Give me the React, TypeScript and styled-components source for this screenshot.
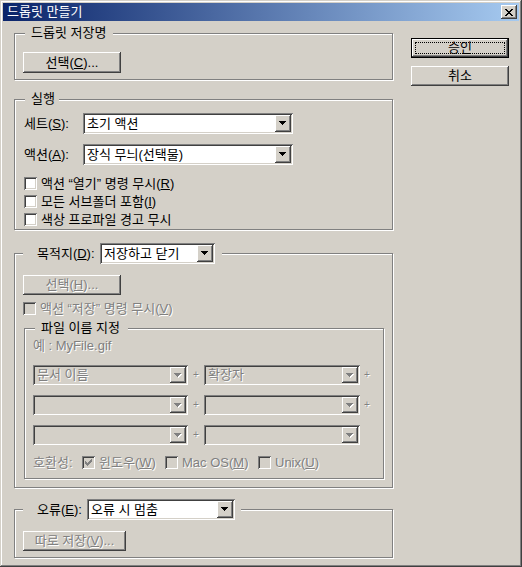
import React from "react";
import styled, { createGlobalStyle, css } from "styled-components";

const FACE = "#D4D0C8";
const SHADOW = "#808080";
const DARK = "#404040";
const FONT = `"Liberation Sans", "Noto Sans CJK KR", sans-serif`;

const GlobalStyle = createGlobalStyle`
  *, *::before, *::after { box-sizing: border-box; }
  html, body { margin: 0; padding: 0; background: ${FACE}; }
  body { font-family: ${FONT}; font-size: 13px; color: #000; }
`;

const raised = css`
  background: ${FACE};
  box-shadow: inset -1px -1px ${DARK}, inset 1px 1px #fff, inset -2px -2px ${SHADOW},
    inset 2px 2px ${FACE};
`;

const sunken = css`
  box-shadow: inset 1px 1px ${SHADOW}, inset -1px -1px #fff, inset 2px 2px ${DARK},
    inset -2px -2px ${FACE};
`;

const disabledText = css`
  color: ${SHADOW};
  text-shadow: 1px 1px 0 #fff;
`;

const Window = styled.div`
  width: 522px;
  height: 567px;
  padding: 3px;
  background: ${FACE};
  box-shadow: inset -1px -1px ${DARK}, inset 1px 1px ${FACE}, inset -2px -2px ${SHADOW},
    inset 2px 2px #fff;
  display: flex;
  flex-direction: column;
`;

const TitleBar = styled.div`
  flex: none;
  height: 18px;
  display: flex;
  align-items: center;
  justify-content: space-between;
  padding: 0 2px 0 4px;
  background: linear-gradient(to right, #0a246a, #a6caf0);
`;

const TitleText = styled.span`
  color: #fff;
  font-size: 13px;
  line-height: 14px;
  white-space: nowrap;
`;

const CloseButton = styled.span`
  width: 16px;
  height: 14px;
  ${raised};
  display: flex;
  align-items: center;
  justify-content: center;
`;

const Body = styled.div`
  flex: 1;
  display: flex;
  align-items: flex-start;
  padding: 5px 0 0 11px;
`;

const LeftColumn = styled.div`
  width: 379px;
  display: flex;
  flex-direction: column;
`;

const RightColumn = styled.div`
  margin-left: 18px;
  padding-top: 12px;
  display: flex;
  flex-direction: column;
  gap: 8px;
`;

const Group = styled.fieldset<{ $mt?: number; $ml?: number; $w?: number }>`
  margin: ${(p) => p.$mt ?? 0}px 0 0 ${(p) => p.$ml ?? 0}px;
  width: ${(p) => (p.$w ? `${p.$w}px` : "auto")};
  padding: 0;
  min-width: 0;
  border: 1px solid ${SHADOW};
  box-shadow: inset 1px 1px #fff, 1px 1px #fff;
`;

const Legend = styled.legend<{ $ml: number; $pl: number; $pr: number; $h: number }>`
  margin-left: ${(p) => p.$ml}px;
  padding: 0 ${(p) => p.$pr}px 0 ${(p) => p.$pl}px;
  height: ${(p) => p.$h}px;
  line-height: ${(p) => p.$h}px;
  background: ${FACE};
  white-space: nowrap;
`;

const LegendRow = styled.div`
  display: flex;
  align-items: center;
  height: 100%;
`;

const GroupBody = styled.div<{ $pad: string }>`
  padding: ${(p) => p.$pad};
  display: flex;
  flex-direction: column;
  align-items: flex-start;
`;

const U = styled.span`
  text-decoration: underline;
  text-underline-offset: 1px;
`;

const PushButton = styled.button<{ $w: number; $h: number; $default?: boolean }>`
  width: ${(p) => p.$w}px;
  height: ${(p) => p.$h}px;
  flex: none;
  margin: 0;
  padding: 0;
  border: 0;
  font: inherit;
  line-height: 14px;
  color: #000;
  display: flex;
  align-items: center;
  justify-content: center;
  white-space: nowrap;
  ${raised};
  ${(p) =>
    p.$default &&
    css`
      padding: 4px;
      box-shadow: inset 0 0 0 1px #000, inset -2px -2px ${DARK}, inset 2px 2px #fff,
        inset -3px -3px ${SHADOW}, inset 3px 3px ${FACE};
    `}
  &:disabled {
    ${disabledText};
  }
`;

const FocusRing = styled.span`
  flex: 1;
  align-self: stretch;
  border: 1px dotted #000;
  display: flex;
  align-items: center;
  justify-content: center;
`;

const FieldRow = styled.div<{ $mt?: number }>`
  display: flex;
  align-items: center;
  margin-top: ${(p) => p.$mt ?? 0}px;
`;

const FieldLabel = styled.span<{ $w: number; $off?: boolean }>`
  width: ${(p) => p.$w}px;
  flex: none;
  white-space: nowrap;
  line-height: 14px;
  ${(p) => p.$off && disabledText};
`;

const ComboBox = styled.div<{ $w: number; $h: number; $off?: boolean }>`
  width: ${(p) => p.$w}px;
  height: ${(p) => p.$h}px;
  flex: none;
  display: flex;
  padding: 2px;
  background: ${(p) => (p.$off ? FACE : "#fff")};
  ${sunken};
`;

const ComboValue = styled.span<{ $off?: boolean }>`
  flex: 1;
  min-width: 0;
  padding-left: 2px;
  display: flex;
  align-items: center;
  white-space: nowrap;
  overflow: hidden;
  line-height: 14px;
  ${(p) => p.$off && disabledText};
`;

const ComboButton = styled.span`
  width: 16px;
  flex: none;
  ${raised};
  display: flex;
  align-items: center;
  justify-content: center;
`;

const CheckRow = styled.div<{ $mt?: number; $off?: boolean; $w?: number }>`
  display: flex;
  align-items: flex-start;
  height: 18px;
  line-height: 18px;
  white-space: nowrap;
  margin-top: ${(p) => p.$mt ?? 0}px;
  width: ${(p) => (p.$w ? `${p.$w}px` : "auto")};
  flex: none;
  ${(p) => p.$off && disabledText};
`;

const Box = styled.span<{ $off?: boolean }>`
  width: 13px;
  height: 13px;
  flex: none;
  margin: 2px 4px 0 0;
  background: ${(p) => (p.$off ? FACE : "#fff")};
  ${sunken};
  display: flex;
  align-items: center;
  justify-content: center;
`;

const HintText = styled.span`
  line-height: 14px;
  ${disabledText};
`;

const NameRow = styled.div<{ $mt: number }>`
  display: flex;
  align-items: center;
  margin-top: ${(p) => p.$mt}px;
`;

const Plus = styled.span<{ $w: number }>`
  width: ${(p) => p.$w}px;
  flex: none;
  text-align: center;
  font-size: 10px;
  line-height: 12px;
  ${disabledText};
`;

const CompatRow = styled.div<{ $mt: number }>`
  display: flex;
  align-items: flex-start;
  margin-top: ${(p) => p.$mt}px;
`;

const CompatLabel = styled.span`
  width: 49px;
  flex: none;
  line-height: 18px;
  ${disabledText};
`;

const Arrow: React.FC<{ off?: boolean }> = ({ off }) => {
  const rows = [
    [0, 0, 7],
    [1, 1, 5],
    [2, 2, 3],
    [3, 3, 1],
  ];
  return (
    <svg width="8" height="5" viewBox="0 0 8 5" shapeRendering="crispEdges">
      {off &&
        rows.map(([x, y, w]) => (
          <rect key={`s${y}`} x={x + 1} y={y + 1} width={w} height={1} fill="#fff" />
        ))}
      {rows.map(([x, y, w]) => (
        <rect key={y} x={x} y={y} width={w} height={1} fill={off ? SHADOW : "#000"} />
      ))}
    </svg>
  );
};

const CheckMark: React.FC<{ color: string }> = ({ color }) => {
  const rows = [
    [6, 0, 1],
    [5, 1, 2],
    [0, 2, 1],
    [4, 2, 3],
    [0, 3, 2],
    [3, 3, 3],
    [0, 4, 5],
    [1, 5, 3],
    [2, 6, 1],
  ];
  return (
    <svg width="7" height="7" viewBox="0 0 7 7" shapeRendering="crispEdges">
      {rows.map(([x, y, w], i) => (
        <rect key={i} x={x} y={y} width={w} height={1} fill={color} />
      ))}
    </svg>
  );
};

const CloseGlyph = () => (
  <svg width="8" height="7" viewBox="0 0 8 7" shapeRendering="crispEdges">
    {[0, 1, 2, 3, 4, 5, 6].map((i) => (
      <React.Fragment key={i}>
        <rect x={i} y={i} width={2} height={1} fill="#000" />
        <rect x={6 - i} y={i} width={2} height={1} fill="#000" />
      </React.Fragment>
    ))}
  </svg>
);

const Combo: React.FC<{ w: number; h: number; value?: string; off?: boolean }> = ({
  w,
  h,
  value,
  off,
}) => (
  <ComboBox $w={w} $h={h} $off={off}>
    <ComboValue $off={off}>{value}</ComboValue>
    <ComboButton>
      <Arrow off={off} />
    </ComboButton>
  </ComboBox>
);

const Check: React.FC<{
  children: React.ReactNode;
  off?: boolean;
  checked?: boolean;
  mt?: number;
  w?: number;
}> = ({ children, off, checked, mt, w }) => (
  <CheckRow $off={off} $mt={mt} $w={w}>
    <Box $off={off}>{checked && <CheckMark color={off ? SHADOW : "#000"} />}</Box>
    <span>{children}</span>
  </CheckRow>
);

export default function App() {
  return (
    <>
      <GlobalStyle />
      <Window>
        <TitleBar>
          <TitleText>드롭릿 만들기</TitleText>
          <CloseButton>
            <CloseGlyph />
          </CloseButton>
        </TitleBar>
        <Body>
          <LeftColumn>
            <Group>
              <Legend $ml={10} $pl={6} $pr={7} $h={14}>
                드롭릿 저장명
              </Legend>
              <GroupBody $pad="12px 0 6px 8px">
                <PushButton $w={98} $h={21}>
                  선택(<U>C</U>)...
                </PushButton>
              </GroupBody>
            </Group>

            <Group $mt={12}>
              <Legend $ml={10} $pl={6} $pr={4} $h={14}>
                실행
              </Legend>
              <GroupBody $pad="7px 0 0 9px">
                <FieldRow>
                  <FieldLabel $w={59}>
                    세트(<U>S</U>):
                  </FieldLabel>
                  <Combo w={210} h={21} value="초기 액션" />
                </FieldRow>
                <FieldRow $mt={10}>
                  <FieldLabel $w={59}>
                    액션(<U>A</U>):
                  </FieldLabel>
                  <Combo w={210} h={21} value="장식 무늬(선택물)" />
                </FieldRow>
                <Check mt={10}>
                  액션 “열기” 명령 무시(<U>R</U>)
                </Check>
                <Check>
                  모든 서브폴더 포함(<U>I</U>)
                </Check>
                <Check>색상 프로파일 경고 무시</Check>
              </GroupBody>
            </Group>

            <Group $mt={13}>
              <Legend $ml={8} $pl={14} $pr={7} $h={21}>
                <LegendRow>
                  <FieldLabel $w={63}>
                    목적지(<U>D</U>):
                  </FieldLabel>
                  <Combo w={115} h={21} value="저장하고 닫기" />
                </LegendRow>
              </Legend>
              <GroupBody $pad="11px 0 8px 8px">
                <PushButton $w={98} $h={20} disabled>
                  선택(<U>H</U>)...
                </PushButton>
                <Check off mt={5}>
                  액션 “저장” 명령 무시(<U>V</U>)
                </Check>
                <Group $mt={3} $ml={1} $w={360}>
                  <Legend $ml={10} $pl={6} $pr={8} $h={14}>
                    파일 이름 지정
                  </Legend>
                  <GroupBody $pad="4px 0 6px 8px">
                    <HintText>예 : MyFile.gif</HintText>
                    <NameRow $mt={12}>
                      <Combo w={155} h={20} value="문서 이름" off />
                      <Plus $w={16}>+</Plus>
                      <Combo w={156} h={20} value="확장자" off />
                      <Plus $w={14}>+</Plus>
                    </NameRow>
                    <NameRow $mt={10}>
                      <Combo w={155} h={20} off />
                      <Plus $w={16}>+</Plus>
                      <Combo w={156} h={20} off />
                      <Plus $w={14}>+</Plus>
                    </NameRow>
                    <NameRow $mt={10}>
                      <Combo w={155} h={20} off />
                      <Plus $w={16}>+</Plus>
                      <Combo w={156} h={20} off />
                    </NameRow>
                    <CompatRow $mt={9}>
                      <CompatLabel>호환성:</CompatLabel>
                      <Check off checked w={83}>
                        윈도우(<U>W</U>)
                      </Check>
                      <Check off w={93}>
                        Mac OS(<U>M</U>)
                      </Check>
                      <Check off>
                        Unix(<U>U</U>)
                      </Check>
                    </CompatRow>
                  </GroupBody>
                </Group>
              </GroupBody>
            </Group>

            <Group $mt={11}>
              <Legend $ml={8} $pl={14} $pr={6} $h={21}>
                <LegendRow>
                  <FieldLabel $w={50}>
                    오류(<U>E</U>):
                  </FieldLabel>
                  <Combo w={148} h={21} value="오류 시 멈춤" />
                </LegendRow>
              </Legend>
              <GroupBody $pad="11px 0 6px 8px">
                <PushButton $w={103} $h={20} disabled>
                  따로 저장(<U>V</U>)...
                </PushButton>
              </GroupBody>
            </Group>
          </LeftColumn>

          <RightColumn>
            <PushButton $w={98} $h={20} $default>
              <FocusRing>승인</FocusRing>
            </PushButton>
            <PushButton $w={98} $h={20}>
              취소
            </PushButton>
          </RightColumn>
        </Body>
      </Window>
    </>
  );
}
